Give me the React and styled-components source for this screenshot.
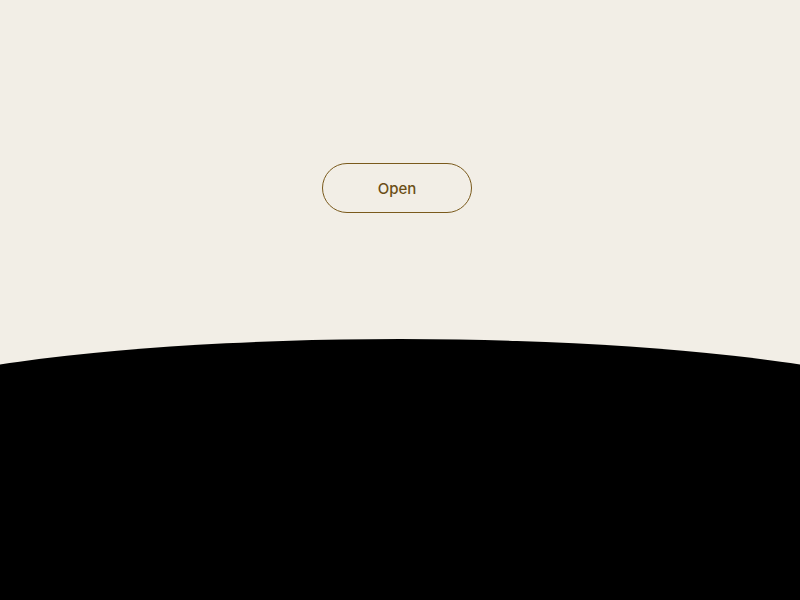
import React from "react";
import styled, { createGlobalStyle } from "styled-components";

const GlobalStyle = createGlobalStyle`
  html, body {
    margin: 0;
    padding: 0;
    background: #f2eee6;
    overflow: hidden;
  }
  body {
    font-family: "Inter", "Liberation Sans", sans-serif;
  }
`;

const Page = styled.div`
  width: 100vw;
  height: 100vh;
  display: flex;
  flex-direction: column;
  overflow: hidden;
  background: #f2eee6;
`;

const Hero = styled.div`
  display: flex;
  justify-content: center;
  padding: 163px 6px 0 0;
  height: 176px;
`;

const OpenButton = styled.button`
  width: 150px;
  height: 50px;
  border: 1px solid #7a5a1c;
  border-radius: 25px;
  background: transparent;
  color: #6b4e16;
  font-family: "Inter", "Liberation Sans", sans-serif;
  font-size: 15px;
  font-weight: 500;
  cursor: pointer;
  padding: 0;
`;

const Sheet = styled.div`
  flex: 1;
  margin: 0 -200px;
  background: #000;
  border-radius: 50% 50% 0 0 / 100px 100px 0 0;
`;

export default function App() {
  return (
    <>
      <GlobalStyle />
      <Page>
        <Hero>
          <OpenButton>Open</OpenButton>
        </Hero>
        <Sheet />
      </Page>
    </>
  );
}
